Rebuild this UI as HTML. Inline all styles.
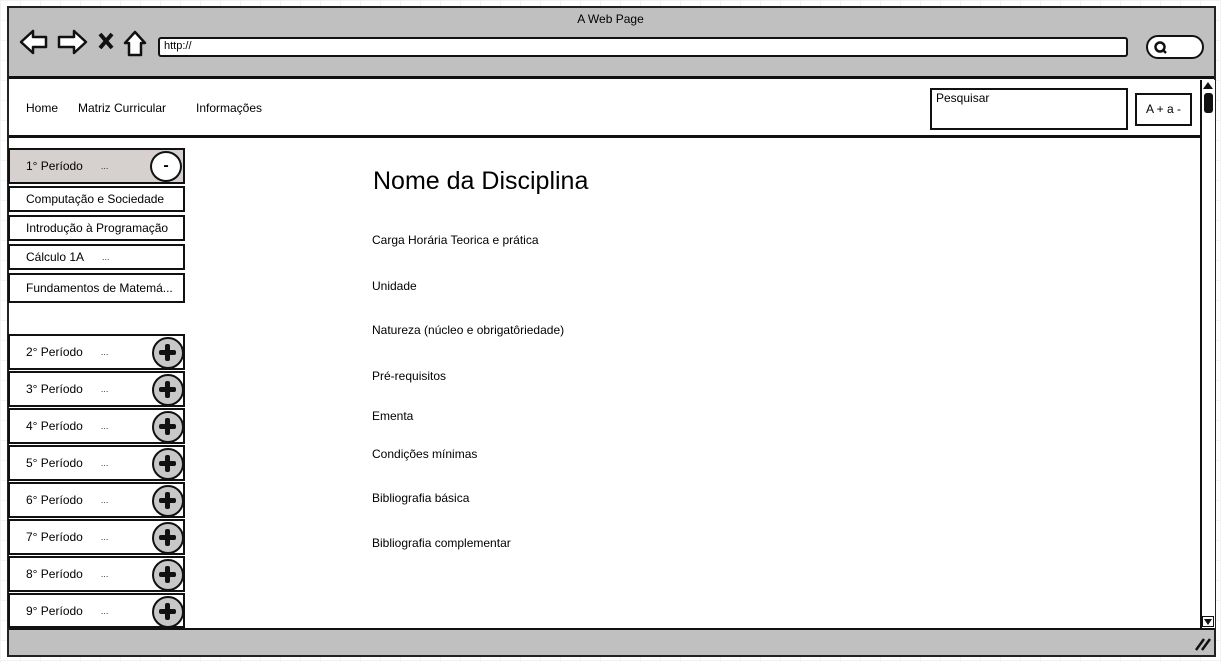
<!DOCTYPE html>
<html><head><meta charset="utf-8"><style>
*{margin:0;padding:0;box-sizing:border-box}
body{width:1221px;height:662px;background:#fff;position:relative;overflow:hidden;font-family:"Liberation Sans",sans-serif;color:#000;
background-image:linear-gradient(#f2f2f2 1px,transparent 1px),linear-gradient(90deg,#f2f2f2 1px,transparent 1px);background-size:20px 20px}
.a{position:absolute}
.win{left:7px;top:6px;width:1209px;height:651px;border:2px solid #222;background:#fff}
.top{left:9px;top:8px;width:1205px;height:71px;background:#c0c0c0;border-bottom:3px solid #111}
.bot{left:9px;top:628px;width:1205px;height:27px;background:#c0c0c0;border-top:2px solid #111}
.url{left:158px;top:37px;width:970px;height:20px;background:#fff;border:2px solid #111;border-radius:3px;font-size:11px;padding:1px 4px}
.srch{left:1146px;top:35px;width:58px;height:24px;background:#fff;border:2px solid #111;border-radius:12px}
.nav{left:9px;top:80px;width:1191px;height:58px;border-bottom:3px solid #111;background:#fff}
.nav span{position:absolute;top:21px;font-size:12px}
.box{border:2px solid #111;background:#fff;font-size:12px}
.item{left:8px;width:177px;border:2px solid #111;background:#fff;font-size:12px;padding-left:16px;display:flex;align-items:center}
.dots{margin-left:18px;font-size:9px;color:#333}
.plus{position:absolute;right:-1px;top:1px;width:32px;height:32px;border-radius:50%;border:2.5px solid #111;background:#c8c8c8}
.plus:before{content:"";position:absolute;left:5px;top:11px;width:17px;height:5px;background:#111;border-radius:2px}
.plus:after{content:"";position:absolute;left:11px;top:5px;width:5px;height:17px;background:#111;border-radius:2px}
.lbl{left:372px;font-size:12px}
</style></head><body>
<div class="a win"></div>
<div class="a top"></div>
<div class="a" style="left:0;top:12px;width:1221px;text-align:center;font-size:12px">A Web Page</div>
<svg class="a" style="left:18px;top:27px" width="140" height="32" viewBox="0 0 140 32">
<path d="M3 15 L15 4 L15 10 L28 10 L28 20 L15 20 L15 26 Z" fill="#fff" stroke="#111" stroke-width="2.5" stroke-linejoin="round"/>
<path d="M68 15 L56 4 L56 10 L41 10 L41 20 L56 20 L56 26 Z" fill="#fff" stroke="#111" stroke-width="2.5" stroke-linejoin="round"/>
<path d="M82 7 L94 21 M94 7 L82 21" stroke="#111" stroke-width="4"/>
<path d="M107 16 L117 5 L127 16 L123 16 L123 28 L111 28 L111 16 Z" fill="#fff" stroke="#111" stroke-width="2.5" stroke-linejoin="round"/>
</svg>
<div class="a url">http://</div>
<div class="a srch"><svg width="20" height="20" style="position:absolute;left:3px;top:1px"><circle cx="9" cy="9" r="4.5" fill="none" stroke="#111" stroke-width="2.5"/><path d="M12 12 L15 15" stroke="#111" stroke-width="2.5"/></svg></div>
<div class="a nav"><span style="left:17px">Home</span><span style="left:69px">Matriz Curricular</span><span style="left:187px">Informações</span></div>
<div class="a box" style="left:930px;top:88px;width:198px;height:42px;padding:1px 4px">Pesquisar</div>
<div class="a box" style="left:1135px;top:93px;width:57px;height:33px;text-align:center;line-height:29px">A + a -</div>
<div class="a" style="left:1200px;top:80px;width:15px;height:548px;border-left:2px solid #111;background:#fff"></div>
<div class="a" style="left:1203px;top:82px;width:0;height:0;border-left:5px solid transparent;border-right:5px solid transparent;border-bottom:7px solid #111"></div>
<div class="a" style="left:1204px;top:93px;width:9px;height:20px;background:#111;border-radius:3px"></div>
<div class="a" style="left:1202px;top:616px;width:12px;height:11px;border:1.5px solid #111"></div>
<div class="a" style="left:1204px;top:619px;width:0;height:0;border-left:4px solid transparent;border-right:4px solid transparent;border-top:6px solid #111"></div>
<div class="a bot"></div>
<svg class="a" style="left:1194px;top:636px" width="18" height="16"><path d="M2 14 L10 3 M8 14 L16 3" stroke="#111" stroke-width="2.5"/></svg>

<div class="a item" style="top:148px;height:36px;background:#d6d0ce">1° Período<span class="dots">...</span>
<div style="position:absolute;right:1px;top:1px;width:32px;height:31px;border-radius:50%;border:2px solid #111;background:#fff;text-align:center;font-weight:bold;font-size:16px;line-height:26px">-</div></div>
<div class="a item" style="top:186px;height:26px">Computação e Sociedade</div>
<div class="a item" style="top:215px;height:26px;white-space:nowrap;overflow:hidden">Introdução à Programação</div>
<div class="a item" style="top:244px;height:26px">Cálculo 1A<span class="dots">...</span></div>
<div class="a item" style="top:273px;height:30px">Fundamentos de Matemá...</div>

<div class="a item" style="top:334px;height:36px">2° Período<span class="dots">...</span><div class="plus"></div></div>
<div class="a item" style="top:371px;height:36px">3° Período<span class="dots">...</span><div class="plus"></div></div>
<div class="a item" style="top:408px;height:36px">4° Período<span class="dots">...</span><div class="plus"></div></div>
<div class="a item" style="top:445px;height:36px">5° Período<span class="dots">...</span><div class="plus"></div></div>
<div class="a item" style="top:482px;height:36px">6° Período<span class="dots">...</span><div class="plus"></div></div>
<div class="a item" style="top:519px;height:36px">7° Período<span class="dots">...</span><div class="plus"></div></div>
<div class="a item" style="top:556px;height:36px">8° Período<span class="dots">...</span><div class="plus"></div></div>
<div class="a item" style="top:593px;height:35px">9° Período<span class="dots">...</span><div class="plus"></div></div>

<div class="a" style="left:373px;top:167px;font-size:25px">Nome da Disciplina</div>
<div class="a lbl" style="top:233px">Carga Horária Teorica e prática</div>
<div class="a lbl" style="top:279px">Unidade</div>
<div class="a lbl" style="top:323px">Natureza (núcleo e obrigatôriedade)</div>
<div class="a lbl" style="top:369px">Pré-requisitos</div>
<div class="a lbl" style="top:409px">Ementa</div>
<div class="a lbl" style="top:447px">Condições mínimas</div>
<div class="a lbl" style="top:491px">Bibliografia básica</div>
<div class="a lbl" style="top:536px">Bibliografia complementar</div>
</body></html>
